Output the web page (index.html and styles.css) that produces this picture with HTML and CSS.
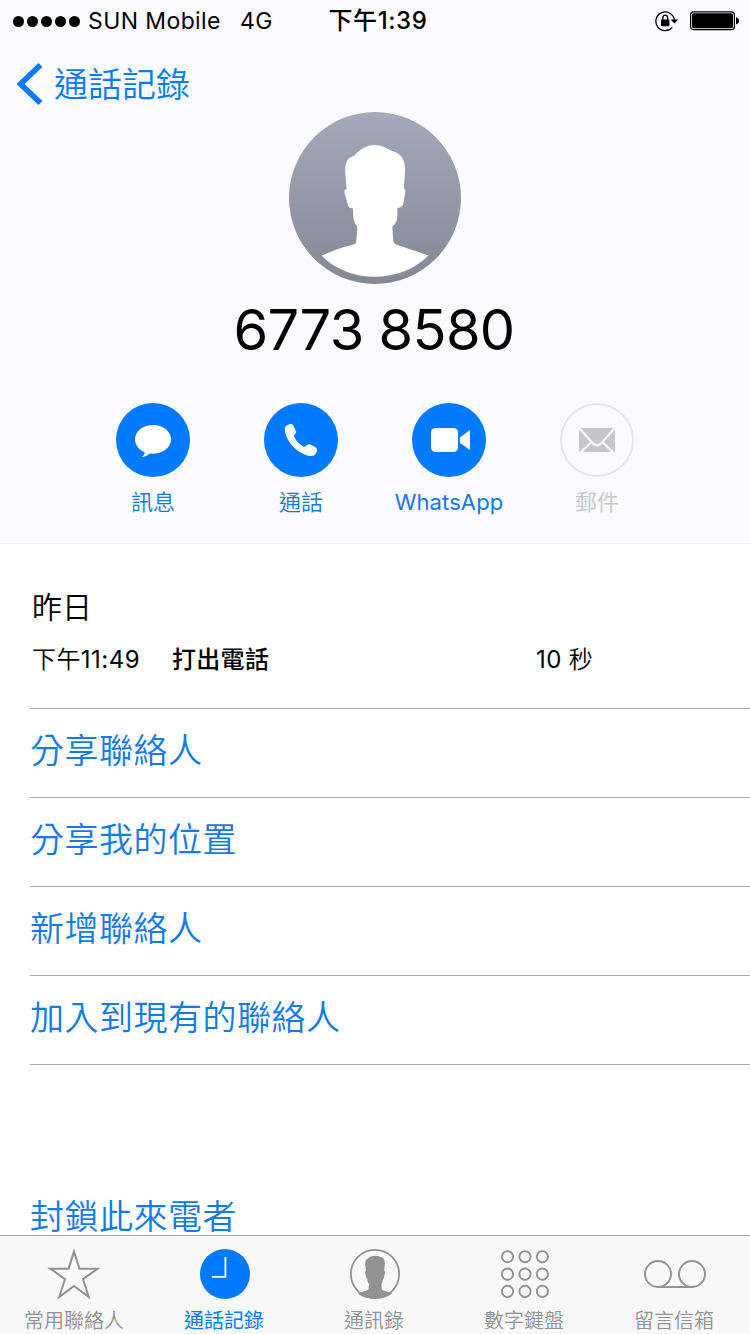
FILE: index.html
```html
<!DOCTYPE html>
<html lang="zh-Hant">
<head>
<meta charset="UTF-8">
<title>通話記錄</title>
<meta name="viewport" content="width=device-width, initial-scale=1.0">
<link rel="stylesheet" href="styles.css">
</head>
<body>

<div class="phone">
    <header class="header">
        <div class="status-bar">
            <div class="status-left">
                <div class="signal"><i></i><i></i><i></i><i></i><i></i></div>
                <span class="carrier">SUN Mobile</span>
                <span class="network">4G</span>
            </div>
            <div class="status-time">下午1:39</div>
            <div class="status-right">
                <svg class="lock-icon" width="24" height="22" viewBox="0 0 24 22">
                    <path d="M17.3 17.3 A9.3 9.3 0 1 1 19.4 10" fill="none" stroke="#000" stroke-width="1.3"/>
                    <path d="M15.6 9.6 H23.2 L19.4 13.4 Z"/>
                    <rect x="6" y="9.6" width="8.4" height="6.6" rx="0.6"/>
                    <path d="M7.8 10 V7.8 A2.4 2.7 0 0 1 12.6 7.8 V10" fill="none" stroke="#000" stroke-width="1.4"/>
                </svg>
                <svg class="battery-icon" width="49" height="20" viewBox="0 0 49 20">
                    <rect x="0.6" y="0.9" width="43.8" height="17.8" rx="3" fill="none" stroke="#000" stroke-width="1.2"/>
                    <rect x="2" y="2.3" width="41" height="15" rx="1.8"/>
                    <path d="M46 6.3 Q49 7.2 49 9.8 Q49 12.4 46 13.3 Z"/>
                </svg>
            </div>
        </div>

        <div class="nav">
            <svg width="26" height="42" viewBox="0 0 26 42">
                <path d="M23.4 2 L3.6 21 L23.4 40" fill="none" stroke="#007aff" stroke-width="5.6"/>
            </svg>
            <span>通話記錄</span>
        </div>

        <svg class="avatar" width="172" height="172" viewBox="0 0 172 172">
            <defs>
                <linearGradient id="avatarFill" x1="0" y1="0" x2="0" y2="1">
                    <stop offset="0" stop-color="#a4aaba"/>
                    <stop offset="1" stop-color="#858794"/>
                </linearGradient>
            </defs>
            <circle cx="86" cy="86" r="86" fill="url(#avatarFill)"/>
            <path fill="#fff" d="M86 33 C93 33 97 36.5 102.7 38.7 C109 40.5 112 43 114.3 48 C116 52 116.2 56 116 61 L114.8 77 Q116.8 77 116.3 80.5 L114.3 91.5 Q113.7 95.5 108.5 96 C107.6 100 109.2 104 107.7 108.5 Q106.5 112.5 103.3 114.5 L104.3 129.5 Q104.5 131.7 107 132.6 L139.5 143.5 C126 157 107 164.8 86 164.8 C65 164.8 46 157 32.7 143.7 Q48 136.5 64.5 132.6 Q67 132 67.2 130 L68.4 114.8 Q65.5 112 64.6 107 C63.8 103 64.5 99 63.8 96.2 Q59.5 96.5 58.8 92.5 L55.5 81 Q54.8 77 57.6 77 L56.2 60 C56 53 57.5 47.5 61.7 45.3 L66 43.2 C70 37.5 78 33 86 33 Z"/>
        </svg>

        <h1 class="number">6773 8580</h1>

        <div class="actions">
            <div class="action">
                <div class="action-circle">
                    <svg width="74" height="74" viewBox="0 0 74 74" fill="#fff">
                        <path d="M37 22 C47 22 55 28.2 55 36.3 C55 44.6 47 50.7 37 50.7 L33.8 50.5 Q30.5 53.8 25.8 54.2 Q28.7 52 28.7 49.3 C23 47 19 42 19 36.3 C19 28.2 27 22 37 22 Z"/>
                    </svg>
                </div>
                <span>訊息</span>
            </div>
            <div class="action">
                <div class="action-circle">
                    <svg width="74" height="74" viewBox="0 0 74 74" fill="#fff">
                        <path d="M22.2 22.8 L25.8 21 Q28.2 20.2 29.3 22.5 L32.2 28.3 Q32.8 30 31 31 Q29.6 32 30.2 33.8 C32 38 35.5 41.7 39.7 43.7 Q41.3 44.3 42.2 42.8 Q43.7 40.6 46 41.3 L51.5 44.3 Q53.7 45.6 53 48 L51.5 51 Q50 53.4 46.5 53 C34 51.5 22.3 39 20.8 27.2 Q20.4 24.2 22.2 22.8 Z"/>
                    </svg>
                </div>
                <span>通話</span>
            </div>
            <div class="action">
                <div class="action-circle">
                    <svg width="74" height="74" viewBox="0 0 74 74" fill="#fff">
                        <rect x="19" y="25" width="27" height="24" rx="4.5"/>
                        <path d="M48 34.5 L58 27 V47 L48 40 Q47.4 37.2 48 34.5 Z"/>
                    </svg>
                </div>
                <span class="latin">WhatsApp</span>
            </div>
            <div class="action disabled">
                <div class="action-circle">
                    <svg width="74" height="74" viewBox="0 0 74 74">
                        <rect x="19" y="25" width="36" height="24" fill="#c5c5ca"/>
                        <path d="M19 25 L33 40.4 Q37 44.2 41 40.4 L55 25 M20.8 49.5 L32 38.5 M53.2 49.5 L42 38.5" fill="none" stroke="#fbfaff" stroke-width="2.2"/>
                    </svg>
                </div>
                <span>郵件</span>
            </div>
        </div>
    </header>

    <main class="content">
        <section class="recent">
            <div class="recent-day">昨日</div>
            <div class="recent-call">
                <span class="call-time">下午<span class="digits">11:49</span></span>
                <span class="call-type">打出電話</span>
                <span class="call-length"><span class="digits">10</span> 秒</span>
            </div>
        </section>

        <ul class="options">
            <li>分享聯絡人</li>
            <li>分享我的位置</li>
            <li>新增聯絡人</li>
            <li>加入到現有的聯絡人</li>
        </ul>

        <div class="block-caller">封鎖此來電者</div>
    </main>

    <nav class="tab-bar">
        <div class="tab">
            <svg width="56" height="52" viewBox="0 0 56 52">
                <path d="M27 3.6 L32.5 20.7 H50.6 L36 31.2 L41.8 49 L27 38 L12.2 49 L18 31.2 L3.4 20.7 H21.5 Z" fill="none" stroke="#929292" stroke-width="2"/>
            </svg>
            <span>常用聯絡人</span>
        </div>
        <div class="tab active">
            <svg width="56" height="52" viewBox="0 0 56 52">
                <circle cx="28" cy="26" r="25" fill="#007aff"/>
                <path d="M28.4 9 V28.8 H15" fill="none" stroke="#fff" stroke-width="1.8"/>
            </svg>
            <span>通話記錄</span>
        </div>
        <div class="tab">
            <svg width="56" height="52" viewBox="0 0 56 52">
                <circle cx="28" cy="26" r="24.1" fill="none" stroke="#929292" stroke-width="1.8"/>
                <path fill="#929292" d="M28 7.7 C31 7.7 34 8.8 36.3 10.3 Q38 12 37.8 16 L37.2 23 Q38.4 23 37.9 25 L37 30 L35.8 31.2 Q36 34.5 34.4 36.3 L34.7 40.6 Q34.8 41.8 36 42.2 L45.3 45.4 C41 49 35 50.5 28 50.5 C21 50.5 15 49 10.7 45.4 L20.3 42.2 Q21.5 41.8 21.6 40.6 L22 36.3 Q20.2 34.5 20.4 31.2 L19.3 30 L18.2 25 Q17.8 23 18.9 23 L18.2 16 Q18 12 20.5 10.8 C22.5 8.8 25 7.7 28 7.7 Z"/>
            </svg>
            <span>通訊錄</span>
        </div>
        <div class="tab">
            <svg width="56" height="52" viewBox="0 0 56 52" fill="none" stroke="#929292" stroke-width="1.9">
                <circle cx="10.5" cy="8.7" r="5.6"/><circle cx="28" cy="8.7" r="5.6"/><circle cx="45.4" cy="8.7" r="5.6"/>
                <circle cx="10.5" cy="26.1" r="5.6"/><circle cx="28" cy="26.1" r="5.6"/><circle cx="45.4" cy="26.1" r="5.6"/>
                <circle cx="10.5" cy="43.4" r="5.6"/><circle cx="28" cy="43.4" r="5.6"/><circle cx="45.4" cy="43.4" r="5.6"/>
            </svg>
            <span>數字鍵盤</span>
        </div>
        <div class="tab">
            <svg width="64" height="52" viewBox="0 0 64 52" fill="none" stroke="#929292" stroke-width="1.9">
                <circle cx="15" cy="26" r="13"/>
                <circle cx="49" cy="26" r="13"/>
                <path d="M15 39 H49"/>
            </svg>
            <span>留言信箱</span>
        </div>
    </nav>
</div>

</body>
</html>
```
FILE: styles.css
```css
html, body {
    margin: 0;
    padding: 0;
    background-color: #fff;
    font-family: Inter, "Noto Sans CJK TC", sans-serif;
    font-weight: 400;
    color: #000;
}

svg {
    display: block;
    flex-shrink: 0;
}

.phone {
    display: flex;
    flex-direction: column;
    width: 750px;
    height: 1334px;
    overflow: hidden;
}

.header {
    display: flex;
    flex-direction: column;
    align-items: center;
    box-sizing: border-box;
    height: 544px;
    flex-shrink: 0;
    background-color: #fbfaff;
    border-bottom: 1px solid #f3f3f6;
}

/* status bar */
.status-bar {
    display: grid;
    grid-template-columns: 300px 1fr 300px;
    align-items: center;
    width: 100%;
    height: 40px;
    font-size: 23px;
    line-height: 42px;
}

.status-left {
    display: flex;
    align-items: center;
    padding-left: 13px;
    letter-spacing: 0.4px;
    white-space: nowrap;
}

.signal {
    display: flex;
    gap: 3px;
    margin-right: 8px;
}

.signal i {
    width: 11px;
    height: 11px;
    border-radius: 50%;
    background-color: #000;
}

.network {
    margin-left: 19px;
}

.status-time {
    text-align: center;
    font-size: 24px;
    font-weight: 500;
    letter-spacing: 0.6px;
    white-space: nowrap;
    padding-left: 6px;
}

.status-right {
    display: flex;
    justify-content: flex-end;
    align-items: center;
    gap: 11px;
    padding: 0 11px 0 0;
}

.nav {
    display: flex;
    align-items: center;
    gap: 11px;
    box-sizing: border-box;
    width: 100%;
    height: 72px;
    padding: 16px 0 0 17px;
    color: #007aff;
    font-size: 34px;
    font-weight: 350;
    line-height: 40px;
}

.nav span {
    padding-top: 2px;
}

.number {
    margin: 16px 0 0 -2px;
    font-size: 56px;
    font-weight: 400;
    line-height: 60px;
    letter-spacing: -0.7px;
    white-space: nowrap;
}

.actions {
    display: grid;
    grid-template-columns: repeat(4, 148px);
    margin-top: 43px;
}

.action {
    display: flex;
    flex-direction: column;
    align-items: center;
    color: #1577e0;
    font-size: 22px;
    font-weight: 350;
    line-height: 30px;
    gap: 10px;
}

.latin {
    font-weight: 400;
    letter-spacing: 0.1px;
}

.action-circle {
    width: 74px;
    height: 74px;
    border-radius: 50%;
    background-color: #007aff;
}

.disabled {
    color: #c5c5ca;
}

.disabled .action-circle {
    background-color: transparent;
    box-shadow: inset 0 0 0 2px #e6e5ea;
}

/* call details and options */
.content {
    flex: 1;
    min-height: 0;
    padding-left: 30px;
}

.recent {
    box-sizing: border-box;
    height: 164px;
    padding: 43px 0 0 2px;
}

.recent-day {
    font-size: 30px;
    font-weight: 350;
    line-height: 40px;
}

.recent-call {
    display: grid;
    grid-template-columns: 140px 364px 1fr;
    margin-top: 17px;
    font-size: 24px;
    line-height: 32px;
}

.call-time, .call-length {
    font-weight: 350;
}

.call-time {
    letter-spacing: 0.4px;
}

.digits {
    font-weight: 400;
    letter-spacing: 0.5px;
}

.call-type {
    font-weight: 500;
    letter-spacing: 0.3px;
}

.options {
    margin: 0;
    padding: 0;
    list-style: none;
    border-top: 1px solid #ababad;
}

.options li, .block-caller {
    box-sizing: border-box;
    height: 89px;
    color: #147ae6;
    font-size: 34px;
    font-weight: 350;
    letter-spacing: 0.5px;
    line-height: 84px;
}

.options li {
    border-bottom: 1px solid #ababad;
}

.block-caller {
    margin-top: 110px;
}

.tab-bar {
    display: grid;
    grid-template-columns: repeat(5, 150px);
    box-sizing: border-box;
    height: 99px;
    flex-shrink: 0;
    background-color: #f8f8f8;
    border-top: 1px solid #ababad;
}

.tab {
    display: flex;
    flex-direction: column;
    align-items: center;
    padding-top: 12px;
    gap: 8px;
    color: #929292;
    font-size: 20px;
    font-weight: 350;
    line-height: 26px;
}

.tab span {
    margin-left: -2px;
}

.active {
    color: #007aff;
    font-weight: 400;
}
```
